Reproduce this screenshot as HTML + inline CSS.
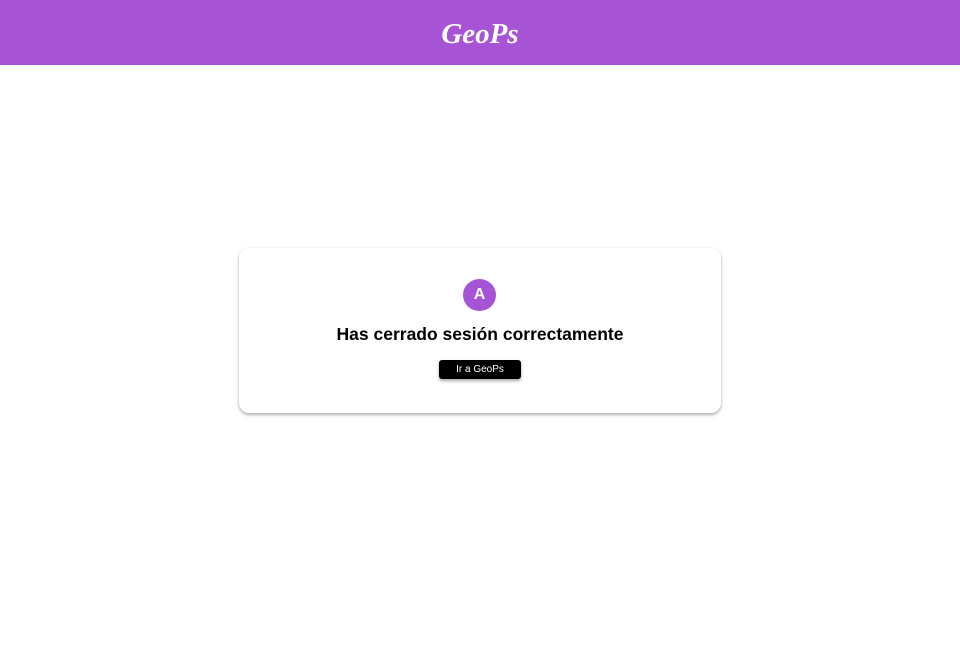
<!DOCTYPE html>
<html><head><meta charset="utf-8"><style>
body{margin:0;width:960px;height:658px;background:#fff;font-family:"Liberation Sans",sans-serif;overflow:hidden}
.h{height:65px;background:#a653d5;text-align:center;color:#fff;font:italic bold 29px "Liberation Serif",serif;line-height:68px}
.c{position:absolute;left:239px;top:248px;width:482px;height:165px;border-radius:10px;background:#fff;box-shadow:0 2px 3px rgba(0,0,0,.3),0 0 2px rgba(0,0,0,.08)}
.a{position:absolute;left:224px;top:31px;width:33px;height:32px;border-radius:50%;background:#a653d5;color:#fff;font-weight:bold;font-size:16px;text-align:center;line-height:32px}
.t{position:absolute;left:0;right:0;top:76px;text-align:center;font-weight:bold;font-size:17.5px;color:#000}
.b{position:absolute;left:200px;top:112px;width:82px;height:19px;background:#000;border-radius:3px;color:#fff;font-size:10px;text-align:center;line-height:20px;box-shadow:0 2px 3px rgba(0,0,0,.35)}
</style></head><body>
<div class="h">GeoPs</div>
<div class="c"><div class="a">A</div><div class="t">Has cerrado sesión correctamente</div><div class="b">Ir a GeoPs</div></div>
</body></html>
